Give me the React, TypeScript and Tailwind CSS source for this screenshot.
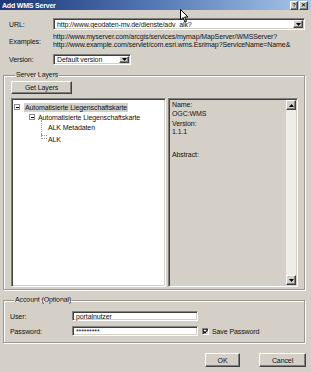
const sunken =
  "border border-t-[#808080] border-l-[#808080] border-b-white border-r-white shadow-[inset_1px_1px_0_#404040,inset_-1px_-1px_0_#d4d0c8]";
const raised =
  "border border-t-white border-l-white border-b-[#404040] border-r-[#404040] shadow-[inset_-1px_-1px_0_#808080]";
const etched =
  "border border-[#9a978f] shadow-[inset_1px_1px_0_#ffffff,1px_1px_0_#ffffff]";

function DropButton({ up = false }: { up?: boolean }) {
  return (
    <div className={`flex items-center justify-center bg-[#d4d0c8] ${raised} w-[10px] h-full`}>
      <svg width="5" height="3" viewBox="0 0 5 3">
        <path d={up ? "M0 3 L2.5 0 L5 3 Z" : "M0 0 L5 0 L2.5 3 Z"} fill="#000" />
      </svg>
    </div>
  );
}

function Combo({ value, className }: { value: string; className: string }) {
  return (
    <div className={`flex items-stretch bg-white ${sunken} p-[1px] ${className}`}>
      <div className="flex-1 flex items-center pl-[2px] overflow-hidden whitespace-nowrap">{value}</div>
      <DropButton />
    </div>
  );
}

function Field({ value }: { value: string }) {
  return (
    <div className={`flex items-center bg-white ${sunken} w-[126px] h-[10px] pl-[3px]`}>{value}</div>
  );
}

function Expander() {
  return (
    <div className="flex items-center justify-center w-[6px] h-[6px] border border-[#8c8c8c] bg-white">
      <div className="w-[3px] h-[1px] bg-black" />
    </div>
  );
}

function Button({ label, className }: { label: string; className: string }) {
  return (
    <div className={`flex items-center justify-center bg-[#d4d0c8] ${raised} ${className}`}>{label}</div>
  );
}

export default function App() {
  return (
    <div className="relative w-[311px] h-[372px] overflow-hidden bg-[#d4d0c8] text-[7px] tracking-[-0.1px] leading-none text-[#111] font-['Liberation_Sans',Tahoma,Arial,sans-serif]">
      {/* title bar */}
      <div className="flex items-center justify-between h-[10px] pl-[2px] pr-[3px] bg-linear-to-r from-[#1a3777] via-[#5579b5] to-[#a9c6ea]">
        <span className="text-white font-bold text-[7px] tracking-[-0.2px]">Add WMS Server</span>
        <div className="flex gap-[1px] h-[9px]">
          <div className={`flex items-center justify-center w-[8px] bg-[#d4d0c8] ${raised} font-bold text-[6px]`}>?</div>
          <div className={`flex items-center justify-center w-[9px] bg-[#d4d0c8] ${raised} font-bold text-[6px]`}>✕</div>
        </div>
      </div>

      <div className="flex flex-col pl-[3px] pr-[6px]">
        {/* URL */}
        <div className="flex items-center mt-[8px] pl-[6px]">
          <span className="w-[44px]">URL:</span>
          <Combo value="http://www.geodaten-mv.de/dienste/adv_alk?" className="w-[252px] h-[12px]" />
        </div>

        {/* Examples */}
        <div className="flex items-center mt-[3px] pl-[6px]">
          <span className="w-[44px]">Examples:</span>
          <div className="flex flex-col leading-[8px] whitespace-nowrap">
            <span>http://www.myserver.com/arcgis/services/mymap/MapServer/WMSServer?</span>
            <span>http://www.example.com/servlet/com.esri.wms.Esrimap?ServiceName=Name&amp;</span>
          </div>
        </div>

        {/* Version */}
        <div className="flex items-center mt-[5px] pl-[6px]">
          <span className="w-[44px]">Version:</span>
          <Combo value="Default version" className="w-[78px] h-[11px]" />
        </div>

        {/* Server Layers */}
        <fieldset className={`mt-[6px] ${etched} pl-[7px] pb-[2px]`}>
          <legend className="ml-[4px] px-[1px] leading-[8px]">Server Layers</legend>
          <Button label="Get Layers" className="mt-[2px] w-[61px] h-[13px]" />
          <div className="flex gap-[2px] mt-[4px] h-[189px]">
            {/* tree */}
            <div className={`w-[155px] bg-white ${sunken} pt-[3px] pl-[2px]`}>
              <div className="flex items-center h-[10px]">
                <Expander />
                <span className="ml-[4px] bg-[#d4d0c8] px-[1px] h-[9px] flex items-center">Automatisierte Liegenschaftskarte</span>
              </div>
              <div className="flex items-center h-[10px] pl-[15px]">
                <Expander />
                <span className="ml-[3px]">Automatisierte Liegenschaftskarte</span>
              </div>
              <div className="flex">
                <div className="ml-[27px] w-[6px] h-[16px] border-l border-b border-dotted border-[#9a9a9a] -mt-[2px]" />
                <span className="h-[10px] flex items-center ml-[1px]">ALK Metadaten</span>
              </div>
              <div className="flex">
                <div className="ml-[27px] w-[6px] h-[5px] border-l border-b border-dotted border-[#9a9a9a] -mt-[2px]" />
                <span className="h-[10px] flex items-center ml-[1px] -mt-[2px]">ALK</span>
              </div>
            </div>
            {/* info */}
            <div className={`w-[130px] flex ${sunken} p-[1px]`}>
              <div className="flex-1 flex flex-col pl-[2px] pt-[1px] leading-[8.5px]">
                <span>Name:</span>
                <span>OGC:WMS</span>
                <span className="mt-[1.5px]">Version:</span>
                <span>1.1.1</span>
                <span className="mt-[14px]">Abstract:</span>
              </div>
              <div className="w-[10px] flex flex-col bg-[#eeede8]">
                <div className="h-[10px]"><DropButton up /></div>
                <div className="flex-1" />
                <div className="h-[10px]"><DropButton /></div>
              </div>
            </div>
          </div>
        </fieldset>

        {/* Account */}
        <fieldset className={`mt-[6px] ${etched} pl-[6px] pb-[6px]`}>
          <legend className="ml-[4px] px-[1px] leading-[8px]">Account (Optional)</legend>
          <div className="flex items-center mt-[7px]">
            <span className="w-[62px]">User:</span>
            <Field value="portalnutzer" />
          </div>
          <div className="flex items-center mt-[5px]">
            <span className="w-[62px]">Password:</span>
            <Field value="*********" />
            <div className={`ml-[4px] w-[7px] h-[7px] bg-white ${sunken} flex items-center justify-center`}>
              <svg width="5" height="5" viewBox="0 0 5 5">
                <path d="M0.5 2.2 L2 3.8 L4.5 0.8" stroke="#000" strokeWidth="1.2" fill="none" />
              </svg>
            </div>
            <span className="ml-[3px]">Save Password</span>
          </div>
        </fieldset>

        {/* buttons */}
        <div className="flex justify-end gap-[19px] mt-[10px] -mr-[1px]">
          <Button label="OK" className="w-[35px] h-[14px]" />
          <Button label="Cancel" className="w-[47px] h-[14px]" />
        </div>
      </div>

      {/* mouse cursor */}
      <svg className="absolute left-[180px] top-[9px]" width="9" height="14" viewBox="0 0 9 14">
        <path d="M0.5 0.5 L0.5 11 L3 8.5 L5 13 L6.5 12.3 L4.6 8 L8 8 Z" fill="#fff" stroke="#000" strokeWidth="1" />
      </svg>
    </div>
  );
}
